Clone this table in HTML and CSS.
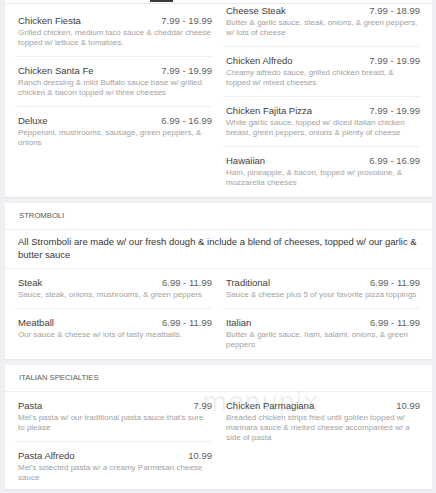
FILE: index.html
```html
<!DOCTYPE html>
<html lang="en">
<head>
<meta charset="utf-8">
<title>Menu</title>
<link rel="stylesheet" href="styles.css">
</head>
<body>
<div class="page">
  <div class="tabs"><span class="tab-ind"></span></div>

  <section class="card card-pizza">
    <div class="cols">
      <div class="col col-first">
        <div class="item">
          <div class="item-head"><span class="name">Chicken Fiesta</span><span class="price">7.99 - 19.99</span></div>
          <p class="desc">Grilled chicken, medium taco sauce &amp; cheddar cheese topped w/ lettuce &amp; tomatoes.</p>
        </div>
        <div class="item">
          <div class="item-head"><span class="name">Chicken Santa Fe</span><span class="price">7.99 - 19.99</span></div>
          <p class="desc">Ranch dressing &amp; mild Buffalo sauce base w/ grilled chicken &amp; bacon topped w/ three cheeses</p>
        </div>
        <div class="item">
          <div class="item-head"><span class="name">Deluxe</span><span class="price">6.99 - 16.99</span></div>
          <p class="desc">Pepperoni, mushrooms, sausage, green peppers, &amp; onions</p>
        </div>
      </div>
      <div class="col">
        <div class="item item-cut">
          <div class="item-head"><span class="name">Cheese Steak</span><span class="price">7.99 - 18.99</span></div>
          <p class="desc">Butter &amp; garlic sauce, steak, onions, &amp; green peppers, w/ lots of cheese</p>
        </div>
        <div class="item">
          <div class="item-head"><span class="name">Chicken Alfredo</span><span class="price">7.99 - 19.99</span></div>
          <p class="desc">Creamy alfredo sauce, grilled chicken breast, &amp; topped w/ mixed cheeses</p>
        </div>
        <div class="item">
          <div class="item-head"><span class="name">Chicken Fajita Pizza</span><span class="price">7.99 - 19.99</span></div>
          <p class="desc">White garlic sauce, topped w/ diced Italian chicken breast, green peppers, onions &amp; plenty of cheese</p>
        </div>
        <div class="item">
          <div class="item-head"><span class="name">Hawaiian</span><span class="price">6.99 - 16.99</span></div>
          <p class="desc">Ham, pineapple, &amp; bacon, topped w/ provolone, &amp; mozzarella cheeses</p>
        </div>
      </div>
    </div>
  </section>

  <section class="card">
    <h2 class="sec-title">Stromboli</h2>
    <p class="intro">All Stromboli are made w/ our fresh dough &amp; include a blend of cheeses, topped w/ our garlic &amp; butter sauce</p>
    <div class="cols">
      <div class="col">
        <div class="item">
          <div class="item-head"><span class="name">Steak</span><span class="price">6.99 - 11.99</span></div>
          <p class="desc">Sauce, steak, onions, mushrooms, &amp; green peppers</p>
        </div>
        <div class="item">
          <div class="item-head"><span class="name">Meatball</span><span class="price">6.99 - 11.99</span></div>
          <p class="desc">Our sauce &amp; cheese w/ lots of tasty meatballs.</p>
        </div>
      </div>
      <div class="col">
        <div class="item">
          <div class="item-head"><span class="name">Traditional</span><span class="price">6.99 - 11.99</span></div>
          <p class="desc">Sauce &amp; cheese plus 5 of your favorite pizza toppings</p>
        </div>
        <div class="item">
          <div class="item-head"><span class="name">Italian</span><span class="price">6.99 - 11.99</span></div>
          <p class="desc">Butter &amp; garlic sauce, ham, salami, onions, &amp; green peppers</p>
        </div>
      </div>
    </div>
  </section>

  <section class="card card-last">
    <h2 class="sec-title">Italian Specialties</h2>
    <div class="cols">
      <div class="col">
        <div class="item">
          <div class="item-head"><span class="name">Pasta</span><span class="price">7.99</span></div>
          <p class="desc">Mel's pasta w/ our traditional pasta sauce that's sure to please</p>
        </div>
        <div class="item">
          <div class="item-head"><span class="name">Pasta Alfredo</span><span class="price">10.99</span></div>
          <p class="desc">Mel's selected pasta w/ a creamy Parmesan cheese sauce</p>
        </div>
      </div>
      <div class="col">
        <div class="item">
          <div class="item-head"><span class="name">Chicken Parmagiana</span><span class="price">10.99</span></div>
          <p class="desc">Breaded chicken strips fried until golden topped w/ marinara sauce &amp; melted cheese accompanied w/ a side of pasta</p>
        </div>
      </div>
    </div>
  </section>

  <div class="watermark" aria-hidden="true">menupix</div>
</div>
</body>
</html>
```

FILE: styles.css
```css
html, body {
  margin: 0;
  padding: 0;
}

body {
  background: #f0f0f4;
  font-family: "Liberation Sans", Arial, sans-serif;
  color: #333;
  height: 493px;
  overflow: hidden;
}

.page {
  position: relative;
  margin: 0 4px 0 5px;
}

.tabs {
  height: 3px;
  background: #fff;
  border-bottom: 1px solid #e8e8ea;
}

.tab-ind {
  display: block;
  margin-left: 145px;
  width: 23px;
  height: 2px;
  background: #3a3a3a;
}

.card {
  background: #fff;
  margin-bottom: 6px;
  box-shadow: 0 1px 1px rgba(0, 0, 0, 0.04);
}

.cols {
  display: grid;
  grid-template-columns: 197px 197px;
  column-gap: 11px;
  padding: 0 12px 0 10px;
  align-items: start;
}

.col-first {
  padding-top: 3px;
}

.item {
  padding: 7px 0 8px 3px;
  border-bottom: 1px solid #efefef;
}

.item:last-child {
  border-bottom-color: transparent;
}

.card-last .item:last-child {
  padding-bottom: 5px;
}

.item-cut {
  padding-top: 0;
}

.item-head {
  display: flex;
  justify-content: space-between;
  font-size: 9.5px;
  line-height: 13px;
}

.name {
  color: #404040;
}

.price {
  color: #606060;
}

.desc {
  margin: 1px 0 0;
  font-size: 8px;
  line-height: 10px;
  color: #a2a2a2;
}

.sec-title {
  margin: 0;
  height: 26px;
  line-height: 26px;
  padding-left: 14px;
  font-size: 7.7px;
  font-weight: normal;
  color: #5a5a5a;
  text-transform: uppercase;
  border-bottom: 1px solid #efefef;
}

.intro {
  margin: 0;
  padding: 5px 12px 7px 13px;
  font-size: 9.5px;
  line-height: 13px;
  color: #383838;
  border-bottom: 1px solid #efefef;
}

.watermark {
  position: absolute;
  left: 197px;
  top: 387px;
  font-family: "DejaVu Sans", sans-serif;
  font-size: 26px;
  letter-spacing: 0.5px;
  color: rgba(120, 120, 120, 0.13);
  pointer-events: none;
}
```
